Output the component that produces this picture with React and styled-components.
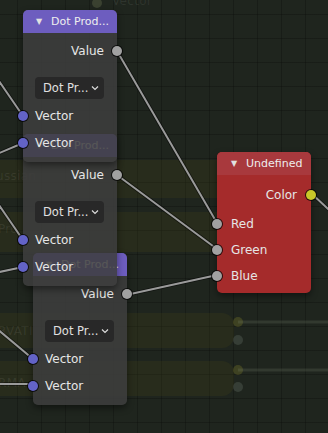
import React from "react";
import styled, { createGlobalStyle } from "styled-components";

const Global = createGlobalStyle`
  html, body { margin: 0; padding: 0; background: #1f251e; }
  body { font-family: "DejaVu Sans", "Liberation Sans", sans-serif; }
`;

const Canvas = styled.div`
  position: relative;
  width: 328px;
  height: 433px;
  overflow: hidden;
  background-color: #1f251e;
  background-image: repeating-linear-gradient(90deg, transparent 0 17px, rgba(0,0,0,0.22) 17px 18px, transparent 18px 24px);
`;

const GridH = styled.div`
  position: absolute;
  inset: 0;
  background-image: repeating-linear-gradient(180deg, transparent 0 14px, rgba(0,0,0,0.22) 14px 15px, transparent 15px 24px);
`;

const Band = styled.div`
  position: absolute;
  left: -20px;
  width: 254px;
  height: ${(p) => p.$h || 35}px;
  border-radius: 0 12px 12px 0;
  background: rgba(64, 64, 22, 0.26);
`;

const GhostText = styled.span`
  position: absolute;
  font-size: 12px;
  color: rgba(200, 200, 190, 0.1);
  white-space: nowrap;
  letter-spacing: 0.3px;
`;

const GhostDot = styled.span`
  position: absolute;
  width: 10px;
  height: 10px;
  border-radius: 50%;
  background: ${(p) => p.$c || "rgba(90,100,70,0.45)"};
`;

const Links = styled.svg`
  position: absolute;
  left: 0;
  top: 0;
`;

const Node = styled.div`
  position: absolute;
  width: 94px;
  border-radius: 5px;
  background: ${(p) => p.$body};
  box-shadow: 0 3px 7px rgba(0, 0, 0, 0.45);
  color: #e6e6e6;
  font-size: 12px;
  display: flex;
  flex-direction: column;
`;

const Header = styled.div`
  height: 23px;
  border-radius: 5px 5px 0 0;
  background: ${(p) => p.$bg};
  display: flex;
  align-items: center;
  gap: 7px;
  padding-left: ${(p) => p.$pl || 13}px;
  color: #eeeeee;
  font-size: 11px;
  white-space: nowrap;
  overflow: hidden;
`;

const Tri = styled.span`
  font-size: 8px;
  color: #e0e0e0;
  width: 8px;
`;

const Body = styled.div`
  display: flex;
  flex-direction: column;
  padding: ${(p) => p.$pt || 7}px 0 ${(p) => p.$pb || 8}px;
  gap: ${(p) => p.$gap || 5}px;
`;

const Row = styled.div`
  position: relative;
  height: 22px;
  display: flex;
  align-items: center;
  justify-content: ${(p) => (p.$out ? "flex-end" : "flex-start")};
  padding: 0 ${(p) => p.$pad || 13}px 0 ${(p) => p.$pad || 12}px;
  margin-top: ${(p) => p.$mt || 0}px;
  white-space: nowrap;
`;

const Socket = styled.span`
  position: absolute;
  top: 50%;
  ${(p) => (p.$out ? "right: -5px;" : "left: -5px;")}
  width: 10px;
  height: 10px;
  margin-top: -5px;
  border-radius: 50%;
  background: ${(p) => p.$c};
  box-shadow: 0 0 0 1px rgba(0, 0, 0, 0.75);
`;

const Select = styled.div`
  height: 22px;
  margin: 10px 13px 0 12px;
  border-radius: 4px;
  background: #282828;
  display: flex;
  align-items: center;
  justify-content: space-between;
  padding: 0 5px 0 8px;
  color: #e0e0e0;
  font-size: 11.5px;
  white-space: nowrap;
`;

const Chevron = () => (
  <svg width="8" height="6" viewBox="0 0 8 6">
    <path d="M1 1.5 L4 4.5 L7 1.5" fill="none" stroke="#dcdcdc" strokeWidth="1.2" />
  </svg>
);

const GRAY = "#a1a1a1";
const VEC = "#6363c7";
const YEL = "#c7c729";

const DotNode = ({ x, y, z }) => (
  <Node $body="rgba(62,62,62,0.86)" style={{ left: x, top: y, zIndex: z }}>
    <Header $bg="#6d5dbf">
      <Tri>▼</Tri>
      <span>Dot Prod...</span>
    </Header>
    <Body>
      <Row $out>
        Value
        <Socket $out $c={GRAY} />
      </Row>
      <Select>
        <span>Dot Pr...</span>
        <Chevron />
      </Select>
      <Row $mt={1}>
        <Socket $c={VEC} />
        Vector
      </Row>
      <Row>
        <Socket $c={VEC} />
        Vector
      </Row>
    </Body>
  </Node>
);

const links = [
  [117, 51, 217, 223],
  [117, 175, 217, 249],
  [126, 295, 217, 275],
  [312, 194, 340, 220],
  [-10, 68, 23, 116],
  [-10, 157, 23, 143],
  [-10, 192, 23, 240],
  [-10, 274, 23, 267],
  [-10, 323, 33, 359],
  [-10, 384, 33, 384],
];

export default function App() {
  return (
    <>
      <Global />
      <Canvas>
        <GridH />
        <Band $h={38} style={{ top: 160 }} />
        <Band $h={40} style={{ top: 212 }} />
        <Band style={{ top: 313 }} />
        <Band style={{ top: 361 }} />
        <GhostDot style={{ left: 233, top: 317 }} $c="rgba(110,110,40,0.4)" />
        <GhostDot style={{ left: 233, top: 335 }} $c="rgba(90,100,90,0.4)" />
        <GhostDot style={{ left: 233, top: 365 }} $c="rgba(110,110,40,0.4)" />
        <GhostDot style={{ left: 233, top: 382 }} $c="rgba(90,100,90,0.4)" />
        <GhostDot style={{ left: 92, top: -2 }} />
        <GhostText style={{ left: 112, top: -6 }}>Vector</GhostText>
        <GhostText style={{ left: -4, top: 169 }}>ussian</GhostText>
        <GhostText style={{ left: -2, top: 222 }}>Pro</GhostText>
        <GhostText style={{ left: -2, top: 324 }}>RVATI</GhostText>
        <GhostText style={{ left: -2, top: 376 }}>RMA</GhostText>

        <Links width="328" height="433" viewBox="0 0 328 433">
          <line x1="238" y1="322" x2="340" y2="322" stroke="rgba(120,130,110,0.22)" strokeWidth="3" />
          <line x1="238" y1="370" x2="340" y2="370" stroke="rgba(120,130,110,0.22)" strokeWidth="3" />
          {links.map(([a, b, c, d], i) => (
            <g key={i}>
              <line x1={a} y1={b} x2={c} y2={d} stroke="rgba(0,0,0,0.5)" strokeWidth="3.6" />
              <line x1={a} y1={b} x2={c} y2={d} stroke="#9a9a9a" strokeWidth="2" />
            </g>
          ))}
        </Links>

        <DotNode x={33} y={253} z={1} />
        <DotNode x={23} y={134} z={2} />
        <DotNode x={23} y={10} z={3} />

        <Node $body="#a52b2b" style={{ left: 217, top: 152, zIndex: 1 }}>
          <Header $bg="#a8393d" $pl={14}>
            <Tri>▼</Tri>
            <span>Undefined</span>
          </Header>
          <Body $gap={4} $pt={9} $pb={6}>
            <Row $out $pad={14}>
              Color
              <Socket $out $c={YEL} />
            </Row>
            <Row $mt={3} $pad={14}>
              <Socket $c={GRAY} />
              Red
            </Row>
            <Row $pad={14}>
              <Socket $c={GRAY} />
              Green
            </Row>
            <Row $pad={14}>
              <Socket $c={GRAY} />
              Blue
            </Row>
          </Body>
        </Node>
      </Canvas>
    </>
  );
}
